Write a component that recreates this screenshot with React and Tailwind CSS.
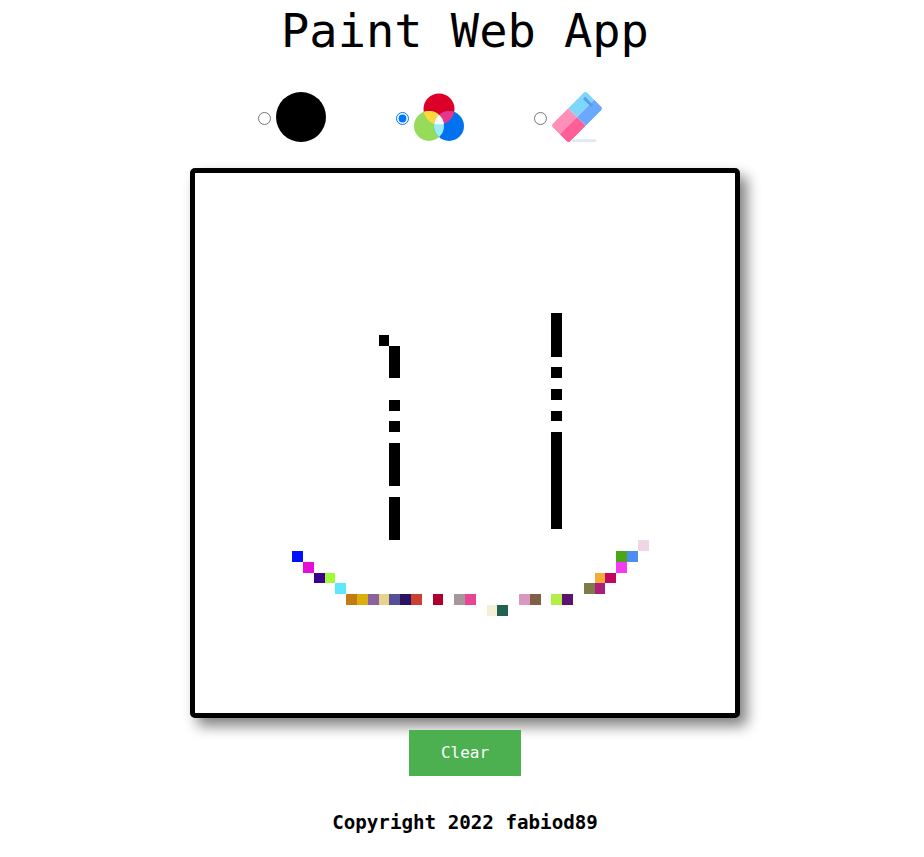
// 50x50 paint grid, painted cells as row -> { column: colour }
const BLACK = "#000000";

const painted = {};

function paint(row, col, color) {
  painted[row + "-" + col] = color;
}

function paintColumn(col, from, to) {
  for (let r = from; r <= to; r++) paint(r, col, BLACK);
}

paint(15, 17, BLACK);
paintColumn(18, 16, 18);
paintColumn(18, 21, 21);
paintColumn(18, 23, 23);
paintColumn(18, 25, 28);
paintColumn(18, 30, 33);

paintColumn(33, 13, 16);
paintColumn(33, 18, 18);
paintColumn(33, 20, 20);
paintColumn(33, 22, 22);
paintColumn(33, 24, 32);

const smile = [
  [35, 9, "#0010ff"],
  [36, 10, "#e30fd8"],
  [37, 11, "#3a008c"],
  [37, 12, "#a0fb3a"],
  [38, 13, "#5fe8fd"],
  [39, 14, "#c27c10"],
  [39, 15, "#dcb00c"],
  [39, 16, "#8a629e"],
  [39, 17, "#e6d28a"],
  [39, 18, "#535096"],
  [39, 19, "#2b1364"],
  [39, 20, "#cb4033"],
  [39, 22, "#ad002c"],
  [39, 24, "#a6979a"],
  [39, 25, "#e84593"],
  [40, 27, "#f5efd6"],
  [40, 28, "#1f6350"],
  [39, 30, "#da97c2"],
  [39, 31, "#7f6047"],
  [39, 33, "#b5ee49"],
  [39, 34, "#5a1470"],
  [38, 36, "#7f7a48"],
  [38, 37, "#ad1d7e"],
  [37, 37, "#f4ab3a"],
  [37, 38, "#c1075f"],
  [36, 39, "#f43bf0"],
  [35, 39, "#48a618"],
  [35, 40, "#4d8cf0"],
  [34, 41, "#efd6e4"],
];
smile.forEach(([r, c, color]) => paint(r, c, color));

const cells = [];
for (let r = 0; r < 50; r++) {
  for (let c = 0; c < 50; c++) {
    cells.push({ id: r + "-" + c, color: painted[r + "-" + c] });
  }
}

function ColorWheel() {
  return (
    <svg width="50" height="50" viewBox="0 0 50 50" className="block">
      <defs>
        <clipPath id="red">
          <circle cx="25" cy="17" r="15.5" />
        </clipPath>
        <clipPath id="green">
          <circle cx="15" cy="34" r="15" />
        </clipPath>
      </defs>
      <circle cx="25" cy="17" r="15.5" fill="#dc0028" />
      <circle cx="15" cy="34" r="15" fill="#96dc5a" />
      <circle cx="35" cy="34" r="15" fill="#0072f0" />
      <g clipPath="url(#red)">
        <circle cx="15" cy="34" r="15" fill="#ffd93b" />
        <circle cx="35" cy="34" r="15" fill="#e8348b" />
      </g>
      <g clipPath="url(#green)">
        <circle cx="35" cy="34" r="15" fill="#9aeef2" />
      </g>
      <g clipPath="url(#red)">
        <g clipPath="url(#green)">
          <circle cx="35" cy="34" r="15" fill="#ffffff" />
        </g>
      </g>
    </svg>
  );
}

function Eraser() {
  return (
    <svg width="50" height="50" viewBox="0 0 50 50" className="block">
      <defs>
        <clipPath id="eraser-body">
          <rect x="0.5" y="12.5" width="49" height="25" rx="3.5" />
        </clipPath>
      </defs>
      <rect x="20" y="47.3" width="24" height="2.7" fill="#e0e8f5" />
      <g transform="rotate(-45 25 25)" clipPath="url(#eraser-body)">
        <rect x="0.5" y="12.5" width="24.5" height="12.5" fill="#ff8fb8" />
        <rect x="0.5" y="25" width="24.5" height="12.5" fill="#ff5f96" />
        <rect x="25" y="12.5" width="24.5" height="12.5" fill="#7ed6f8" />
        <rect x="25" y="25" width="24.5" height="12.5" fill="#6aa9ff" />
        <rect x="42" y="16.5" width="3" height="11.5" fill="#5b9cf0" />
      </g>
    </svg>
  );
}

function Tool({ icon, checked }) {
  return (
    <label className="mr-[70px] flex items-center">
      <input
        type="radio"
        name="tool"
        defaultChecked={checked}
        className="m-0 mt-[2px] mr-[5px] h-[13px] w-[13px]"
      />
      {icon}
    </label>
  );
}

export default function App() {
  return (
    <div className="flex flex-col items-center pl-[6px] font-['DejaVu_Sans_Mono',monospace] text-black">
      <h1 className="mt-[4px] text-[47px] leading-[54px]">Paint Web App</h1>

      <div className="mt-[34px] flex">
        <Tool icon={<div className="h-[50px] w-[50px] rounded-full bg-black" />} />
        <Tool icon={<ColorWheel />} checked />
        <Tool icon={<Eraser />} />
      </div>

      <div className="mt-[26px] grid h-[550px] w-[550px] grid-cols-[repeat(50,1fr)] grid-rows-[repeat(50,1fr)] rounded-[5px] border-[5px] border-black bg-white shadow-[7px_8px_14px_#808080]">
        {cells.map((cell) => (
          <div key={cell.id} style={cell.color ? { backgroundColor: cell.color } : undefined} />
        ))}
      </div>

      <button className="mt-[12px] h-[46px] w-[112px] bg-[#4caf50] text-center text-[16px] text-white">
        Clear
      </button>

      <p className="mt-[35px] text-[19.2px] leading-[23px] font-bold">Copyright 2022 fabiod89</p>
    </div>
  );
}
